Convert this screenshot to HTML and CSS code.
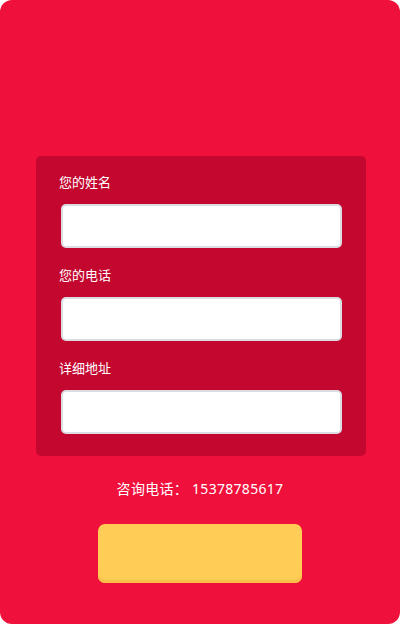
FILE: index.html
```html
<!DOCTYPE html>
<html lang="zh">
<head>
<meta charset="utf-8">
<link rel="stylesheet" href="styles.css">
</head>
<body>
<div class="page">
  <div class="top"></div>
  <form class="panel">
    <label class="label">您的姓名</label>
    <input class="field" type="text">
    <label class="label">您的电话</label>
    <input class="field" type="text">
    <label class="label">详细地址</label>
    <input class="field" type="text">
  </form>
  <div class="phone">咨询电话： 15378785617</div>
  <div class="btn"></div>
</div>
</body>
</html>
```
FILE: styles.css
```css
html, body {
  margin: 0;
  padding: 0;
  background: #ffffff;
}
body {
  width: 400px;
  height: 624px;
  font-family: "Noto Sans", "Noto Sans CJK SC", sans-serif;
}
.page {
  width: 400px;
  height: 624px;
  background: #f0103c;
  border-radius: 12px;
  display: flex;
  flex-direction: column;
  align-items: center;
  overflow: hidden;
}
.top {
  height: 156px;
  flex: none;
}
.panel {
  box-sizing: border-box;
  width: 330px;
  margin: 0 0 0 2px;
  padding: 16px 24px 22px 25px;
  background: #c3072f;
  border-radius: 5px;
  display: flex;
  flex-direction: column;
}
.label {
  display: block;
  height: 20px;
  line-height: 20px;
  font-size: 13px;
  color: #ffffff;
  margin: 17px 0 12px -2px;
}
.label:first-child {
  margin-top: 0;
}
.field {
  box-sizing: border-box;
  display: block;
  width: 281px;
  height: 44px;
  margin: 0;
  border: 2px solid #dcdde3;
  border-radius: 5px;
  background: #ffffff;
  outline: none;
}
.phone {
  margin-top: 23px;
  height: 20px;
  line-height: 20px;
  font-size: 14px;
  color: #ffffff;
  letter-spacing: 0.3px;
}
.btn {
  margin-top: 25px;
  width: 204px;
  height: 59px;
  box-sizing: border-box;
  background: #ffcc55;
  border-radius: 7px;
  box-shadow: inset 0 -3px 0 #f7be48;
}
```
